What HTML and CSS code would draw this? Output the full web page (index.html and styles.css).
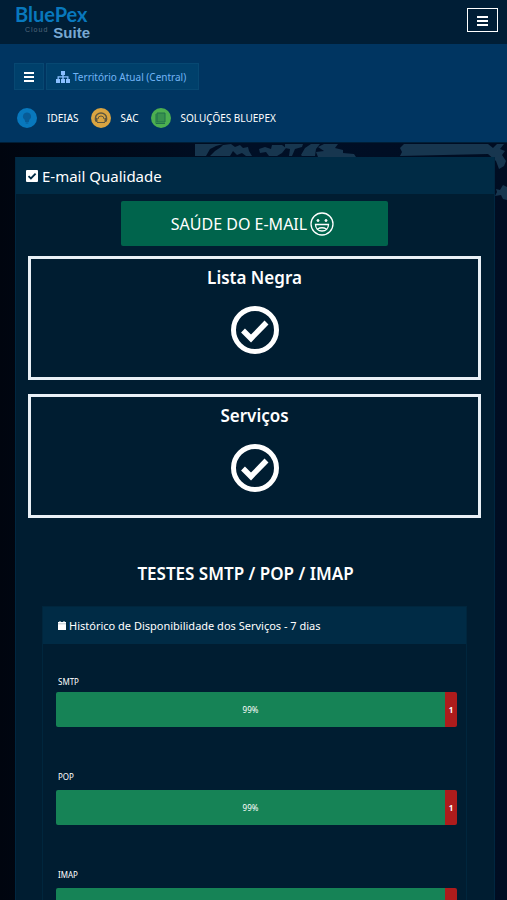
FILE: index.html
```html
<!DOCTYPE html>
<html lang="pt-BR">
<head>
    <meta charset="UTF-8">
    <meta name="viewport" content="width=device-width, initial-scale=1.0">
    <title>BluePex Cloud Suite - E-mail Qualidade</title>
    <link rel="stylesheet" href="styles.css">
</head>
<body>
    <header class="topbar">
        <a href="#" class="logo">
            <span class="logo-name">BluePex</span>
            <span class="logo-sub"><span class="logo-cloud">Cloud</span> <span class="logo-suite">Suite</span></span>
        </a>
        <button type="button" class="menu-toggle" aria-label="Menu">
            <svg width="11" height="10" viewBox="0 0 11 10"><path d="M0 0h11v2H0zM0 4h11v2H0zM0 8h11v2H0z"/></svg>
        </button>
    </header>

    <nav class="subnav">
        <div class="territory">
            <button type="button" class="nav-btn nav-btn-menu" aria-label="Abrir menu">
                <svg width="10" height="10" viewBox="0 0 10 10"><path d="M0 0h10v2H0zM0 4h10v2H0zM0 8h10v2H0z"/></svg>
            </button>
            <button type="button" class="nav-btn">
                <svg width="14" height="12" viewBox="0 0 14 12"><path d="M5 0h4v4H7.700v1.300H12.500V8H14v4H10V8h1.200V6.600H7.700V8H9v4H5V8h1.300V6.600H2.800V8H4v4H0V8h1.500V5.300h4.800V4H5z"/></svg>
                Território Atual (Central)
            </button>
        </div>
        <ul class="links">
            <li><a href="#">
                <svg class="badge" viewBox="0 0 20 20"><circle cx="10" cy="10" r="10" fill="#0878bd"/><path d="M10 4.500a4 4 0 0 1 2.300 7.300L11.800 14H8.200l-.5-2.200A4 4 0 0 1 10 4.500zM8.700 14.500h2.600v1H8.700z" fill="#075b97"/></svg>
                IDEIAS</a></li>
            <li><a href="#">
                <svg class="badge" viewBox="0 0 20 20"><circle cx="10" cy="10" r="10" fill="#d9a441"/><path d="M4.500 12v-2a5.500 5 0 0 1 11 0v2" fill="none" stroke="#5d563f" stroke-width="1.500"/><path d="M4 10h2.500v4H5l-1-1zM13.500 10H16v3l-1 1h-1.500z" fill="#5d563f"/><path d="M7 11a3 3 0 0 1 6 0M6 14.500h8" fill="none" stroke="#5d563f"/></svg>
                SAC</a></li>
            <li><a href="#">
                <svg class="badge" viewBox="0 0 20 20"><circle cx="10" cy="10" r="10" fill="#4caf50"/><rect x="6" y="5" width="8" height="9" fill="#37914f"/><path d="M6 5h8v9H6zM5 6v9.500h9" fill="none" stroke="#20704a"/></svg>
                SOLUÇÕES BLUEPEX</a></li>
        </ul>
    </nav>

    <main class="content">
        <svg class="map" width="314" height="100" viewBox="0 0 314 100">
            <path d="M2 1h28l-7 2-6 3-4 7H2zM30 2l8-1 4 3 5-2 3 3 5-1 1 4 3 5h-6l-4-3-5 2-4-4-3 5H17l5-5 6-4zM66 6l6-2 6 2 1-4h10l4 3-4 5-5 3h-8l-3-4-6 1zM92 1h18l-1 3-7 2-3 7h-3l1-7-5-1zM108 12l4-7 6-4h9l-4 5-1 7h-13zM125 4l6-3h14l-3 4 8 2v3l11 1 2 3h-38l-2-5 8-1z"/>
            <path d="M207 13l2-4-2-4 4-4h84l5 4 4-4h7l-4 5 5 2-3 4 4 6-2 5-5 3-3-8-8-7zM303 46l4 1 3-5 4 2v13l-4-1-2-4-6 1 2-4z"/>
        </svg>

        <section class="panel">
            <h1 class="panel-title">
                <svg width="12" height="12" viewBox="0 0 12 12"><rect width="12" height="12" rx="1" fill="#fff"/><path d="M2.500 6.200l2.400 2.300L9.600 3.700" fill="none" stroke="#002b45" stroke-width="1.800"/></svg>
                E-mail Qualidade
            </h1>
            <div class="panel-body">
                <button type="button" class="health">
                    SAÚDE DO E-MAIL
                    <svg width="24" height="24" viewBox="0 0 24 24" fill="none" stroke="#fff" stroke-width="1.300"><circle cx="12" cy="12" r="11"/><circle cx="8" cy="8.500" r="1" fill="#fff" stroke-width="1"/><circle cx="16" cy="8.500" r="1" fill="#fff" stroke-width="1"/><path d="M5.500 12.500h13c0 3.800-2.700 6.500-6.500 6.500s-6.500-2.700-6.500-6.500zM7.500 17c2.500-1.400 6.500-1.400 9 0"/></svg>
                </button>

                <div class="status">
                    <h2>Lista Negra</h2>
                    <svg width="48" height="48" viewBox="0 0 48 48" fill="none" stroke="#fff"><circle cx="24" cy="24" r="21.500" stroke-width="5"/><path d="M12 24.500l8 8 15.500-16" stroke-width="5.500"/></svg>
                </div>
                <div class="status">
                    <h2>Serviços</h2>
                    <svg width="48" height="48" viewBox="0 0 48 48" fill="none" stroke="#fff"><circle cx="24" cy="24" r="21.500" stroke-width="5"/><path d="M12 24.500l8 8 15.500-16" stroke-width="5.500"/></svg>
                </div>

                <h2 class="tests-title">TESTES SMTP / POP / IMAP</h2>

                <section class="history">
                    <h3 class="history-title">
                        <svg width="8" height="9" viewBox="0 0 8 9"><path d="M0 1h1.500V0h1v1h3V0h1v1H8v8H0z" fill="#fff"/><path d="M0 2.800h8" stroke="#7890a0" stroke-width=".5"/></svg>
                        Histórico de Disponibilidade dos Serviços - 7 dias
                    </h3>
                    <div class="service">
                        <p>SMTP</p>
                        <div class="bar"><span class="ok">99%</span><span class="fail">1</span></div>
                    </div>
                    <div class="service">
                        <p>POP</p>
                        <div class="bar"><span class="ok">99%</span><span class="fail">1</span></div>
                    </div>
                    <div class="service">
                        <p>IMAP</p>
                        <div class="bar"><span class="ok">99%</span><span class="fail">1</span></div>
                    </div>
                </section>
            </div>
        </section>
    </main>
</body>
</html>
```
FILE: styles.css
```css
* {
    box-sizing: border-box;
}
body {
    margin: 0;
    min-height: 100vh;
    display: flex;
    flex-direction: column;
    font-family: "Segoe UI", "Noto Sans", sans-serif;
    color: #fff;
    background-color: #000c1e;
}
h1, h2, h3, p, ul {
    margin: 0;
    padding: 0;
    font-weight: normal;
}
button {
    font-family: inherit;
    color: inherit;
    cursor: pointer;
}
svg {
    flex: none;
}

/* topo */
.topbar {
    flex: none;
    display: flex;
    justify-content: space-between;
    align-items: flex-start;
    height: 44px;
    padding: 4px 9px 0 15px;
    background-color: #001e36;
}
.logo {
    display: flex;
    flex-direction: column;
    text-decoration: none;
}
.logo-name {
    font: bold 20px/20px Lato, sans-serif;
    color: #0878bd;
}
.logo-sub {
    display: flex;
    gap: 5px;
    padding-left: 10px;
}
.logo-cloud {
    font: 7px/12px "Liberation Sans", sans-serif;
    letter-spacing: 1px;
    color: #50677c;
}
.logo-suite {
    font: bold 15px/18px "Liberation Sans", sans-serif;
    color: #78a8d2;
}
.menu-toggle {
    display: flex;
    align-items: center;
    justify-content: center;
    width: 31px;
    height: 24px;
    margin-top: 4px;
    padding: 2px 0 0;
    background: none;
    border: 1px solid #fff;
    fill: #fff;
}

/* navegação */
.subnav {
    flex: none;
    height: 99px;
    padding: 19px 14px 0;
    background-color: #003561;
    border-bottom: 1px solid #001e36;
}
.territory {
    display: flex;
    gap: 2px;
}
.nav-btn {
    display: flex;
    align-items: center;
    gap: 3px;
    height: 27px;
    padding: 0 12px 0 9px;
    font-size: 10px;
    color: #72b4f5;
    fill: #8abfff;
    background-color: #00406b;
    border: 1px solid #074872;
}
.nav-btn-menu {
    padding: 0 9px;
    fill: #fff;
}
.links {
    display: flex;
    gap: 12px;
    margin-top: 17px;
    padding-left: 3px;
    list-style: none;
}
.links a {
    display: flex;
    align-items: center;
    gap: 10px;
    font-size: 10px;
    line-height: 22px;
    color: #fff;
    text-decoration: none;
}
.badge {
    width: 20px;
    height: 20px;
}

/* conteúdo */
.content {
    position: relative;
    flex: 1;
    padding: 14px 12px 0 15px;
    background: linear-gradient(90deg, #00050f, #000f26 50%, #000d22);
}
.map {
    position: absolute;
    top: 0;
    right: 0;
    fill: #17364f;
}
.panel {
    position: relative;
    background-color: #001d31;
    border: 1px solid #002640;
    border-top: 0;
}
.panel-title {
    display: flex;
    align-items: center;
    gap: 4px;
    height: 37px;
    padding: 0 10px;
    font-size: 15px;
    background-color: #002b45;
}
.panel-body {
    padding: 7px 13px 0 12px;
}
.health {
    display: flex;
    align-items: center;
    justify-content: center;
    gap: 3px;
    width: 59%;
    height: 45px;
    margin: 0 auto 10px;
    padding: 0 4px 0 0;
    font-size: 16px;
    background-color: #00644c;
    border: 0;
    border-radius: 2px;
}
.status {
    display: flex;
    flex-direction: column;
    align-items: center;
    gap: 16px;
    height: 124px;
    margin-bottom: 14px;
    padding-top: 7px;
    border: 3px solid #e9f0f6;
}
.status h2,
.tests-title {
    font-size: 17px;
    line-height: 24px;
    font-weight: 600;
}
.tests-title {
    margin: 44px 18px 20px 0;
    text-align: center;
}
.history {
    margin: 0 14px;
    border: 1px solid #00263d;
}
.history-title {
    display: flex;
    align-items: center;
    gap: 3px;
    height: 37px;
    padding: 0 15px;
    font-size: 11px;
    background-color: #002b45;
}
.service {
    padding: 0 9px 0 13px;
    margin-bottom: 40px;
    font-size: 8px;
}
.service p {
    padding: 0 0 3px 2px;
    line-height: 20px;
}
.history-title + .service {
    padding-top: 28px;
}
.history-title + .service p {
    padding-bottom: 0;
}
.bar {
    display: flex;
    height: 35px;
    border-radius: 2px;
    overflow: hidden;
}
.bar span {
    display: flex;
    align-items: center;
    justify-content: center;
}
.ok {
    flex: 1;
    background-color: #168356;
}
.fail {
    width: 12px;
    font-weight: bold;
    background-color: #ae1c1c;
}
```
